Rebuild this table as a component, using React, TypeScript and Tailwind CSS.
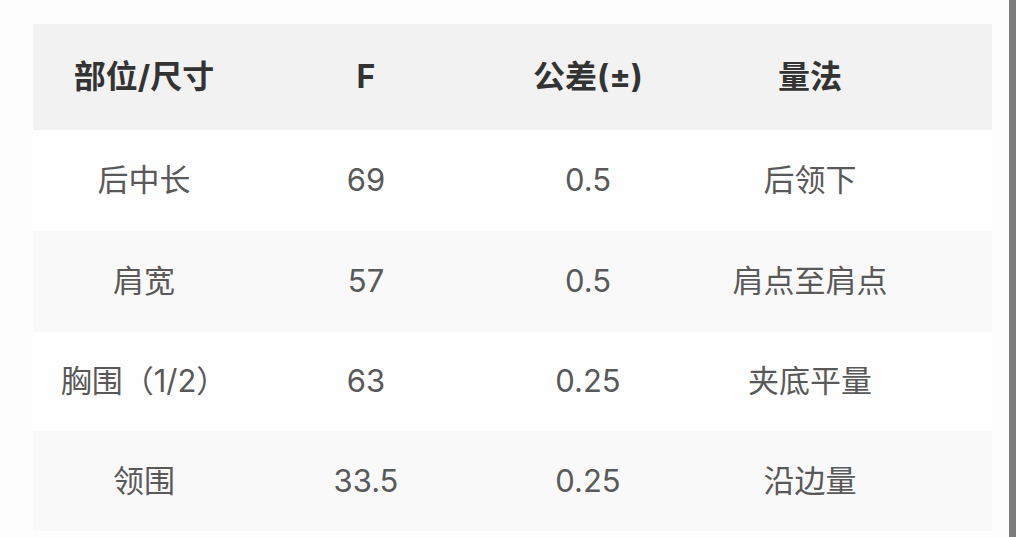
const rows = [
	{ part: "后中长", size: "69", tol: "0.5", method: "后领下" },
	{ part: "肩宽", size: "57", tol: "0.5", method: "肩点至肩点" },
	{ part: "胸围（1/2）", size: "63", tol: "0.25", method: "夹底平量" },
	{ part: "领围", size: "33.5", tol: "0.25", method: "沿边量" },
]

const rowHeights = ["h-[101px]", "h-[101px]", "h-[99px]", "h-[100px]"]

export default function App() {
	return (
		<div
			className="flex h-[537px] w-[1024px] overflow-hidden bg-[#fdfdfd]"
			style={{ fontFamily: 'Inter, "Noto Sans CJK SC", sans-serif' }}
		>
			<div className="ml-[33px] mt-[24px] w-[959px] shrink-0">
				{/* header */}
				<div className="grid h-[106px] grid-cols-[222px_222px_222px_222px] items-center bg-[#f2f2f2] text-[32px] font-bold text-[#333]">
					<div className="text-center">部位/尺寸</div>
					<div className="text-center">F</div>
					<div className="text-center">公差(±)</div>
					<div className="text-center">量法</div>
				</div>
				{rows.map((r, i) => (
					<div
						key={r.part}
						className={`grid grid-cols-[222px_222px_222px_222px] items-center text-[31px] text-[#595959] ${rowHeights[i]} ${
							i % 2 === 1 ? "bg-[#f9f9f9]" : "bg-[#fefefe]"
						}`}
					>
						<div className="text-center">{r.part}</div>
						<div className="text-center">{r.size}</div>
						<div className="text-center">{r.tol}</div>
						<div className="text-center">{r.method}</div>
					</div>
				))}
			</div>
			<div className="ml-[17px] h-full w-[7px] shrink-0 bg-[#7c7c7c]" />
			<div className="flex-1 bg-white" />
		</div>
	)
}
